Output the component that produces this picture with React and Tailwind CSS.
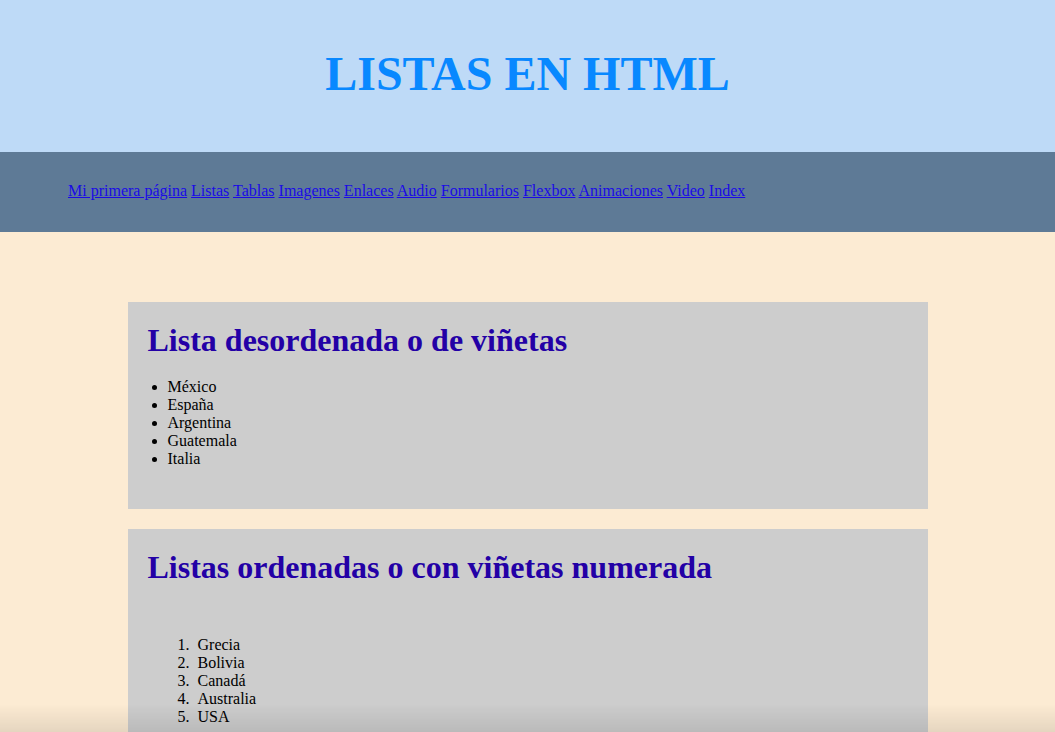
import React from 'react';

const links = ['Mi primera página', 'Listas', 'Tablas', 'Imagenes', 'Enlaces', 'Audio', 'Formularios', 'Flexbox', 'Animaciones', 'Video', 'Index'];
const desordenada = ['México', 'España', 'Argentina', 'Guatemala', 'Italia'];
const ordenada = ['Grecia', 'Bolivia', 'Canadá', 'Australia', 'USA'];

export default function App() {
    return (
        <div className="min-h-screen bg-[#fcebd3] text-black font-['Liberation_Serif',serif]">
            {/* Header */}
            <header className="h-[152px] bg-[#bedaf7] flex items-center justify-center">
                <h1 className="mb-[5px] text-[48px] font-bold text-[#0888ff] leading-none">LISTAS EN HTML</h1>
            </header>

            {/* Nav */}
            <nav className="h-[80px] bg-[#5e7a96] pl-[68px] pt-[30px] text-[16px] leading-[18px]">
                {links.map((l, i) => (
                    <React.Fragment key={l}>
                        <a href="#" className="underline text-[#1a0ae6]">{l}</a>{i < links.length - 1 ? ' ' : ''}
                    </React.Fragment>
                ))}
            </nav>

            <main className="pt-[70px] pb-10 flex flex-col items-center gap-5">
                <section className="w-[800px] bg-[#cdcdcd] px-5 pt-[18px] pb-[41px]">
                    <h2 className="text-[32px] leading-[40px] font-bold text-[#2300a6]">Lista desordenada o de viñetas</h2>
                    <ul className="mt-[18px] pl-5 list-disc text-[16px] leading-[18px]">
                        {desordenada.map(p => <li key={p}>{p}</li>)}
                    </ul>
                </section>

                <section className="w-[800px] bg-[#cdcdcd] px-5 pt-[18px] pb-[41px]">
                    <h2 className="text-[32px] leading-[40px] font-bold text-[#2300a6]">Listas ordenadas o con viñetas numerada</h2>
                    <ol className="mt-[49px] pl-[46px] list-decimal text-[16px] leading-[18px]">
                        {ordenada.map(p => <li key={p} className="pl-[4px]">{p}</li>)}
                    </ol>
                </section>
            </main>

            {/* bottom edge shading */}
            <div className="fixed bottom-0 left-0 right-0 h-[28px] bg-gradient-to-b from-transparent to-black/[0.09] pointer-events-none" />
        </div>
    );
}
